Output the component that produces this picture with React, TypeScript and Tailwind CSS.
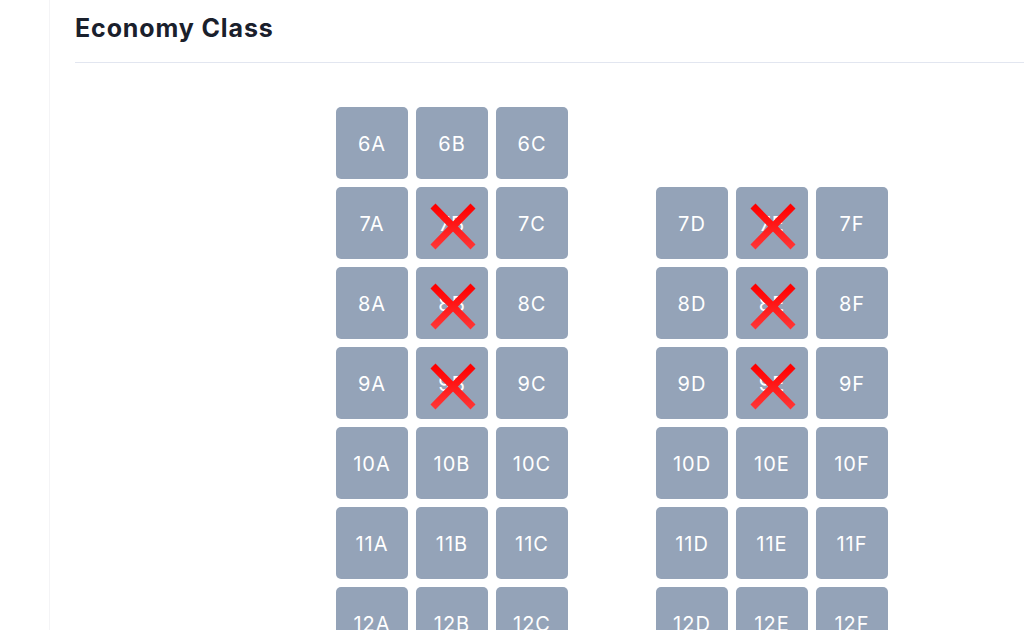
import React from "react";

const rows = [6, 7, 8, 9, 10, 11, 12];
const taken = new Set(["7B", "8B", "9B", "7E", "8E", "9E"]);

function Cross() {
  return (
    <svg
      className="absolute left-[14px] top-[16px] pointer-events-none"
      width="46"
      height="47"
      viewBox="0 0 46 47"
    >
      <defs>
        <linearGradient id="xg" x1="0" y1="0" x2="0" y2="1">
          <stop offset="0" stopColor="#ff0000" />
          <stop offset="1" stopColor="#ff3434" />
        </linearGradient>
      </defs>
      <path d="M3 3 L43 44 M43 3 L3 44" stroke="url(#xg)" strokeWidth="7" strokeLinecap="butt" fill="none" />
    </svg>
  );
}

function Seat({ label }: { label: string }) {
  return (
    <div className="relative w-[72px] h-[72px] rounded-[5px] bg-[#94a3b8] flex items-center justify-center text-white text-[20px] tracking-[0.05em] leading-none">
      <span className="pt-[2px]">{label}</span>
      {taken.has(label) && <Cross />}
    </div>
  );
}

export default function App() {
  return (
    <div className="h-[630px] w-[1024px] overflow-hidden bg-white flex" style={{ fontFamily: "Inter, 'Noto Sans', sans-serif" }}>
      <div className="w-[50px] shrink-0 border-r border-[#f4f4f6]" />
      <div className="flex-1 pl-[25px]">
        <div className="pt-[12px] pb-[18px] border-b border-[#e2e6f0]">
          <h2 className="text-[25px] leading-[32px] font-bold tracking-[0.035em] text-[#1a202c]">Economy Class</h2>
        </div>
        <div className="pl-[261px] pt-[44px]">
          <div className="grid grid-cols-[repeat(7,72px)] gap-[8px]">
            {rows.map((r) => (
              <React.Fragment key={r}>
                <Seat label={`${r}A`} />
                <Seat label={`${r}B`} />
                <Seat label={`${r}C`} />
                <div />
                {r === 6 ? (
                  <>
                    <div />
                    <div />
                    <div />
                  </>
                ) : (
                  <>
                    <Seat label={`${r}D`} />
                    <Seat label={`${r}E`} />
                    <Seat label={`${r}F`} />
                  </>
                )}
              </React.Fragment>
            ))}
          </div>
        </div>
      </div>
    </div>
  );
}
